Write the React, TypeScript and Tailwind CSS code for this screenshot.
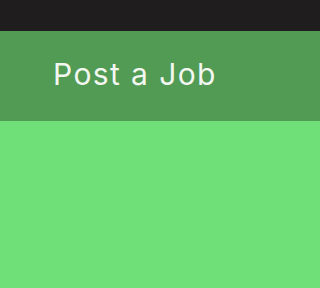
import React from 'react';

function App() {
    return (
        <div className="min-h-screen flex flex-col bg-[#6fe077]">
            <div className="h-[31px] bg-[#1f1d1e]"></div>
            <div className="h-[90px] bg-[#529b54] flex items-center pl-[53px]">
                <h1 className="text-[30px] leading-none tracking-[1.4px] text-[#f3f7f1] font-['Inter',sans-serif] pb-[4px]">
                    Post a Job
                </h1>
            </div>
            <div className="flex-1"></div>
        </div>
    );
}

export default App;
